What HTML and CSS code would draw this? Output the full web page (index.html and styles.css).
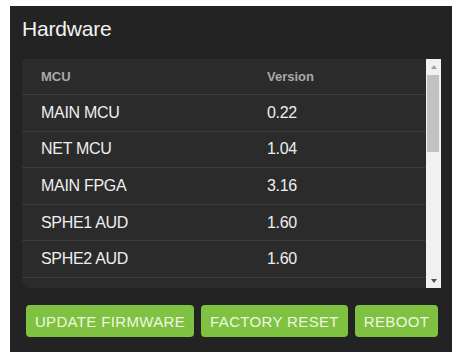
FILE: index.html
```html
<!DOCTYPE html>
<html lang="en">
<head>
  <meta charset="UTF-8">
  <title>Hardware</title>
  <link rel="stylesheet" href="styles.css">
</head>
<body>
  <div class="panel">
    <h2 class="panel-title">Hardware</h2>
    <div class="table-wrap">
      <div class="table-scroll">
        <div class="hw-row hw-head">
          <span>MCU</span>
          <span>Version</span>
        </div>
        <div class="hw-row"><span>MAIN MCU</span><span>0.22</span></div>
        <div class="hw-row"><span>NET MCU</span><span>1.04</span></div>
        <div class="hw-row"><span>MAIN FPGA</span><span>3.16</span></div>
        <div class="hw-row"><span>SPHE1 AUD</span><span>1.60</span></div>
        <div class="hw-row"><span>SPHE2 AUD</span><span>1.60</span></div>
      </div>
      <div class="scrollbar">
        <span class="sb-btn sb-up"></span>
        <span class="sb-track"><span class="sb-thumb"></span></span>
        <span class="sb-btn sb-down"></span>
      </div>
    </div>
    <div class="actions">
      <button class="btn btn-update">UPDATE FIRMWARE</button>
      <button class="btn btn-reset">FACTORY RESET</button>
      <button class="btn btn-reboot">REBOOT</button>
    </div>
  </div>
</body>
</html>
```

FILE: styles.css
```css
body {
  margin: 0;
  background: #fff;
  font-family: 'Liberation Sans', Arial, sans-serif;
}
.panel {
  width: 442px;
  margin: 6px 0 0 10px;
  box-sizing: border-box;
  padding: 11px 11px 15px 12px;
  background: #232323;
}
.panel-title {
  margin: 0 0 18px 0;
  font-size: 21px;
  line-height: 24px;
  font-weight: normal;
  letter-spacing: -0.2px;
  color: #f2f2f2;
}
.table-wrap {
  display: flex;
  height: 229px;
}
.table-scroll {
  flex: 1;
  overflow: hidden;
  background: #2b2b2b;
  border-radius: 3px 0 0 7px;
}
.hw-row {
  display: grid;
  grid-template-columns: 226px 1fr;
  align-items: center;
  height: 36.6px;
  box-sizing: border-box;
  padding-left: 19px;
  border-bottom: 1px solid #3b3b3b;
  font-size: 16px;
  letter-spacing: -0.3px;
  color: #efefef;
}
.hw-head {
  height: 36px;
  font-size: 13px;
  font-weight: bold;
  letter-spacing: 0;
  color: #a9a9a9;
}
.scrollbar {
  width: 15px;
  display: flex;
  flex-direction: column;
  background: #f1f1f1;
}
.sb-btn {
  height: 15px;
  display: flex;
  align-items: center;
  justify-content: center;
}
.sb-btn::before {
  content: '';
  border-left: 3.5px solid transparent;
  border-right: 3.5px solid transparent;
}
.sb-up::before {
  border-bottom: 4px solid #a3a3a3;
}
.sb-down::before {
  border-top: 4px solid #505050;
}
.sb-track {
  flex: 1;
  padding: 1px 2px 0 1px;
}
.sb-thumb {
  display: block;
  height: 77px;
  background: #c1c1c1;
}
.actions {
  display: flex;
  gap: 7px;
  margin: 17px 3px 0 4px;
}
.btn {
  height: 32px;
  padding: 0;
  border: none;
  border-radius: 4px;
  background: #7fc241;
  color: #eef6e2;
  font-family: 'Liberation Sans', Arial, sans-serif;
  font-size: 15px;
  letter-spacing: 0.35px;
  white-space: nowrap;
  cursor: pointer;
}
.btn-update {
  flex: 0 0 168px;
}
.btn-reset {
  flex: 0 0 147px;
}
.btn-reboot {
  flex: 1;
}
```
